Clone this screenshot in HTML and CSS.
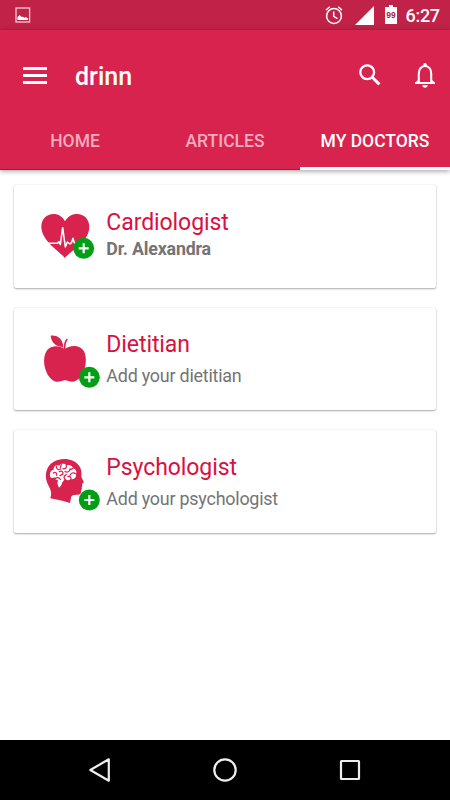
FILE: index.html
```html
<!DOCTYPE html>
<html lang="en">
<head>
<meta charset="utf-8">
<title>drinn</title>
<link rel="stylesheet" href="styles.css">
</head>
<body>
<div class="screen">
  <div class="status">
    <svg class="status-picture" width="16" height="16" viewBox="0 0 16 16"><rect x="1" y="1" width="13.6" height="14" fill="none" stroke="#f4ccd6" stroke-width="1.3"/><path d="M2.5 13V10l2.2-2 1.6 1.8h1.5l1.5 1 1.6-.8 2.2 1.5V13z" fill="#fff"/></svg>
    <svg class="status-alarm" width="20" height="20" viewBox="0 0 20 20" fill="none" stroke="#fff" stroke-width="1.5"><circle cx="10" cy="11" r="7.4"/><path d="M2 5.1 5.8 1.8M14.2 1.8 18 5.1M9.7 6.6v4.7l3.8 2.3"/></svg>
    <svg class="status-signal" width="20" height="19" viewBox="0 0 20 19"><path d="M19 0v19H0z" fill="#fff"/></svg>
    <div class="battery"><span>99</span></div>
    <span class="clock">6:27</span>
  </div>
  <header class="header">
    <div class="toolbar">
      <div class="menu"><i></i><i></i><i></i></div>
      <h1>drinn</h1>
      <svg class="search" width="24" height="24" viewBox="0 0 24 24" fill="none" stroke="#fff"><circle cx="9.2" cy="9.2" r="6.9" stroke-width="2.3"/><path d="m14.2 14.2 7.2 7.2" stroke-width="2.9"/></svg>
      <svg class="bell" width="22" height="26" viewBox="0 0 22 26"><path d="M4.8 20.8v-9C4.8 7.3 7.2 4 11 4s6.2 3.3 6.2 7.8v9" fill="none" stroke="#fff" stroke-width="2.1"/><path d="M1 22v-1.4l3-2.6v2h14v-2l3 2.6V22zM9.2 4.5V2.7a1.8 1.8 0 0 1 3.6 0v1.8zM8.4 23.1h5.2a2.6 2.6 0 0 1-5.2 0z" fill="#fff"/></svg>
    </div>
    <nav class="tabs"><span>HOME</span><span>ARTICLES</span><span class="active">MY DOCTORS</span></nav>
  </header>
  <main class="list">
    <article class="card cardio">
      <svg class="icon" width="80" height="70" viewBox="0 0 240 210">
        <path d="M104 174C91 155 34 123 34 80c0-23 16-38 36-38 16 0 28 8 35 22 8-14 20-22 36-22 21 0 37 16 37 39 0 42-55 72-74 93z" fill="#d8234f"/>
        <path d="M54 130h28l5-5 4 9 7-51 8 58 6-15 8 6 5-5 4-12 4 14h5" fill="none" stroke="#fff" stroke-width="4.6" stroke-linejoin="round"/>
        <circle cx="161" cy="145" r="31.5" fill="#049e16"/><path d="M161 130v30M146 145h30" stroke="#fff" stroke-width="6.5"/>
      </svg>
      <div class="info"><h2>Cardiologist</h2><p class="doctor">Dr. Alexandra</p></div>
    </article>
    <article class="card diet">
      <svg class="icon" width="80" height="70" viewBox="0 0 240 210">
        <path d="M104 72c-15-12-42-12-54 5-14 22-8 60 10 81 12 13 24 15 35 10 7-3 13-3 20 0 13 5 25 2 35-11 18-20 23-60 11-80-11-18-39-18-57-5z" fill="#d8234f"/>
        <path d="M62 32c18-2 35 6 38 34-19-1-36-10-38-34z" fill="#d8234f"/><path d="M112 42c-7 7-9 16-8 32" fill="none" stroke="#d8234f" stroke-width="5"/>
        <circle cx="178" cy="157" r="31.5" fill="#049e16"/><path d="M178 142v30M163 157h30" stroke="#fff" stroke-width="6.5"/>
      </svg>
      <div class="info"><h2>Dietitian</h2><p>Add your dietitian</p></div>
    </article>
    <article class="card psych">
      <svg class="icon" width="80" height="70" viewBox="0 0 240 210">
        <path d="M61 151c5-15 2-24-5-37-15-28-10-58 15-73 27-15 62-8 77 13 7 11 7 21 6 31 0 5 7 13 7 18 0 3-5 4-5 6 1 4 2 7-1 9 2 5-1 7-2 10 1 8-2 12-10 12-13 0-20 2-20 10l-3 15c-20-7-39-10-59-14z" fill="#d8234f"/>
        <path d="M60 84c-2-10 3-18 11-19-1-10 7-16 16-12 7-8 18-7 23-1 9-3 18 1 19 9 10 3 12 11 9 18 2 10-6 17-16 14-6 5-12 4-18 1l-8 10c1 5-5 11-9 15-4-7-6-14-3-22-8-1-10-5-8-9-8 4-15 3-16-4z" fill="#fff"/>
        <path d="M70 75c6-4 12 0 10 7M79 55c0 9 6 12 13 8M94 50l-3 9M109 52c2 8-4 12-10 10M88 71c7-4 12 0 11 7l-9 5M75 92c7-6 13-3 16 2M107 96c-8-5-5-14 2-16M105 71c8 3 14 0 15-8M137 77c-8-5-14-2-17 5M123 93c0-7-4-9-9-7M128 62l-7 3" fill="none" stroke="#d8234f" stroke-width="3.8" stroke-linecap="round"/>
        <circle cx="178" cy="156" r="31.5" fill="#049e16"/><path d="M178 141v30M163 156h30" stroke="#fff" stroke-width="6.5"/>
      </svg>
      <div class="info"><h2>Psychologist</h2><p>Add your psychologist</p></div>
    </article>
  </main>
  <footer class="navbar">
    <svg width="24" height="26" viewBox="0 0 24 26"><path d="M20.8 2.3v21.4L2.3 13z"/></svg>
    <svg width="26" height="26" viewBox="0 0 26 26"><circle cx="13" cy="13" r="10.7"/></svg>
    <svg width="24" height="24" viewBox="0 0 24 24"><rect x="3" y="3" width="18" height="18" rx=".5"/></svg>
  </footer>
</div>
</body>
</html>
```
FILE: styles.css
```css
* { box-sizing: border-box; }
body, h1, h2, p { margin: 0; }
body { background: #fff; font-family: Roboto, "Liberation Sans", sans-serif; }
svg { display: block; flex: none; }
.screen { width: 450px; height: 800px; display: flex; flex-direction: column; overflow: hidden; }
.status { height: 30px; flex: none; display: flex; align-items: flex-start; background: #c12247; color: #fff; }
.status-picture { margin: 7px 0 0 14.5px; }
.status-alarm { margin: 5px 0 0 293.5px; }
.status-signal { margin: 6px 0 0 11px; }
.battery { width: 12px; height: 19px; margin: 5px 0 0 10px; background: #fff; clip-path: polygon(0 2px, 4px 2px, 4px 0, 8px 0, 8px 2px, 12px 2px, 12px 19px, 0 19px); color: #a62447; font-family: "Liberation Sans", sans-serif; font-size: 8.5px; font-weight: 700; line-height: 20px; text-align: center; }
.clock { margin-left: 8.5px; font-size: 18px; letter-spacing: -.3px; font-weight: 500; line-height: 31px; }
.header { height: 140px; flex: none; position: relative; background: #d8234f; border-bottom: 1px solid #d00037; box-shadow: 0 1px 5px rgba(0,0,0,.4); }
.toolbar { height: 90px; display: flex; align-items: center; padding-left: 23px; color: #fff; }
.menu { width: 24px; height: 17px; display: flex; flex-direction: column; justify-content: space-between; }
.menu i { height: 3px; background: #fff; }
h1 { width: 283px; margin-left: 28px; padding-top: 3px; font-size: 25px; line-height: 30px; font-weight: 500; }
.search { margin-top: -1px; }
.bell { margin-left: 32px; }
.tabs { height: 50px; display: grid; grid-template-columns: repeat(3, 1fr); color: #f2acbd; font-size: 17.5px; font-weight: 500; line-height: 43px; text-align: center; }
.active { color: #fff; border-bottom: 3px solid #fff; }
.list { flex: 1; display: flex; flex-direction: column; gap: 20px; padding: 15px 14px; }
.card { height: 102.7px; flex: none; display: flex; align-items: flex-start; padding-left: 16px; background: #fff; border-radius: 2px; box-shadow: 0 1px 2px rgba(0,0,0,.32), 0 0 1px rgba(0,0,0,.2); }
.icon { width: 80px; height: 70px; margin-right: -3.7px; }
.cardio .icon { margin-top: 15px; }
.diet .icon { margin-top: 17px; }
.psych .icon { margin-top: 18px; }
.info { padding-top: 23px; }
.cardio .info { padding-top: 24px; }
.psych .info { padding-top: 24px; }
h2 { color: #d8123f; font-size: 23px; letter-spacing: -.08px; font-weight: 400; line-height: 28px; }
.info p { margin-top: 5px; color: #747474; font-size: 17.9px; letter-spacing: -.22px; line-height: 24px; }
.info .doctor { margin-top: 0; font-size: 17.8px; letter-spacing: -.17px; font-weight: 700; }
.navbar { height: 60px; flex: none; display: grid; grid-template-columns: repeat(3, 125px); justify-content: center; align-items: center; justify-items: center; background: #000; }
.navbar svg { fill: none; stroke: #eee; stroke-width: 2.2; stroke-linejoin: round; }
```
